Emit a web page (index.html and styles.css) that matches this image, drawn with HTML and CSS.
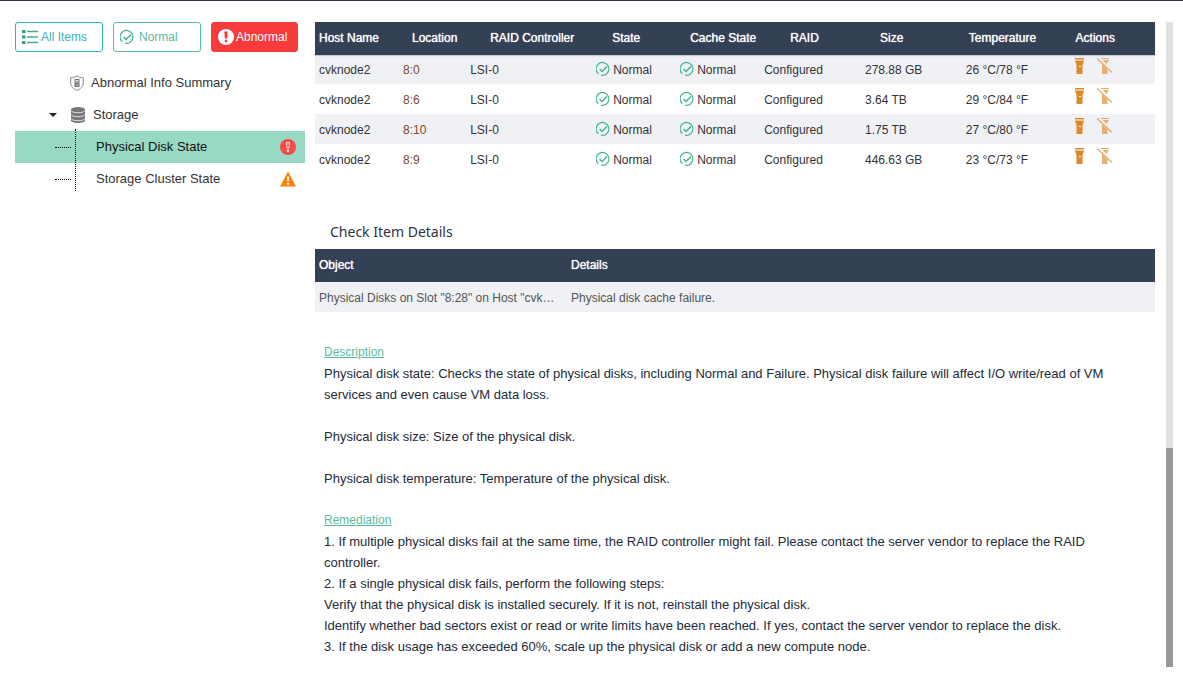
FILE: index.html
```html
<!DOCTYPE html>
<html lang="en">
<head>
<meta charset="utf-8">
<title>Health Check</title>
<link rel="stylesheet" href="styles.css">
</head>
<body>
<svg class="defs" aria-hidden="true">
  <symbol id="i-ok" viewBox="0 0 14 14">
    <path d="M2.400 11.800A6.400 6.400 0 1 1 5 13.100M10.500 12.400a6.400 6.400 0 0 1-4 1" fill="none" stroke="#3fb489" stroke-width="1.100"/>
    <path d="M3.600 7.100l2.500 2.400 4.800-5" fill="none" stroke="#3fb489" stroke-width="1.400"/>
  </symbol>
  <symbol id="i-torch" viewBox="0 0 16 16">
    <path d="M4 0h9v1H4z" fill="#d98a2c"/>
    <path d="M4 1h9v2H4z" fill="#ecc493"/>
    <path d="M4 3h9l-1.500 4v9h-6V7z" fill="#dd8a26"/>
    <path d="M8 8h2v1H8z" fill="#fff3e2"/>
  </symbol>
  <symbol id="i-torch-off" viewBox="0 0 16 16">
    <path d="M3.500 0H12v1H4.500z" fill="#e3aa66"/>
    <path d="M5.500 2H12l-2.500 4z" fill="#e6b075"/>
    <path d="M5 6l5.500 5.500V16H5z" fill="#e6b075"/>
    <path d="M0 .5l15 14" stroke="#e6b075" stroke-width="1.600"/>
  </symbol>
</svg>
<div class="page">
  <aside class="sidebar">
    <div class="filters">
      <button class="filter all"><svg class="icon16" viewBox="0 0 16 14"><path d="M0 0h3.500v3H0zM0 5.500h3.500v3H0zM0 11h3.500v3H0z" fill="#2fa385"/><path d="M5 1.500h11M5 7h11M5 12.500h11" stroke="#3fae90" stroke-width="1.600"/></svg>All Items</button>
      <button class="filter normal"><svg class="icon14"><use href="#i-ok"/></svg>Normal</button>
      <button class="filter abnormal"><svg class="icon16" viewBox="0 0 16 16"><circle cx="8" cy="8" r="8" fill="#fff"/><path d="M6.300 2.600h3.400L9.200 9.500H6.800z" fill="#f83b3b"/><circle cx="8" cy="12" r="1.400" fill="#f83b3b"/></svg>Abnormal</button>
    </div>
    <ul class="tree">
      <li class="node summary">
        <svg class="icon14" viewBox="0 0 14 16"><path d="M7 .8c2 1.500 4 2 6.300 2V8c0 3.500-2.500 5.800-6.300 7.300C3.200 13.800.7 11.500.7 8V2.800c2.300 0 4.300-.5 6.300-2z" fill="none" stroke="#888"/><path d="M4.500 4h5v8h-5z" fill="#777"/><path d="M5.500 5.500h3M5.500 7h3M7 9v2" stroke="#fff" stroke-width=".8"/></svg>
        Abnormal Info Summary
      </li>
      <li class="node storage">
        <svg class="caret" viewBox="0 0 8 4"><path d="M0 0h8L4 4z" fill="#222"/></svg>
        <svg class="icon16" viewBox="0 0 16 16"><path d="M1 2.500v11C1 14.900 4 16 8 16s7-1.100 7-2.500v-11" fill="#777"/><ellipse cx="8" cy="2.500" rx="7" ry="2.500" fill="#777"/><path d="M1 3.500c1 3 13 3 14 0M1 7.500c1 3 13 3 14 0M1 11.500c1 3 13 3 14 0" fill="none" stroke="#eee" stroke-width=".9"/></svg>
        Storage
      </li>
      <li>
        <ul class="children">
          <li class="node leaf selected">
            <span class="link-line"></span><span class="label">Physical Disk State</span>
            <svg class="icon16" viewBox="0 0 16 16"><circle cx="8" cy="8" r="8" fill="#f94a4a"/><path d="M6 3h4l-.7 6.500H6.700z" fill="#fbd9d3"/><path d="M7.300 4h1.400v4H7.300z" fill="#f94a4a"/><circle cx="8" cy="12" r="1.400" fill="#fbd9d3"/></svg>
          </li>
          <li class="node leaf">
            <span class="link-line"></span><span class="label">Storage Cluster State</span>
            <svg class="icon16" viewBox="0 0 16 16"><path d="M8 .5L16 15.500H0z" fill="#ff8208"/><path d="M7 5.500h2l-.3 5H7.300zM7 12h2v1.800H7z" fill="#fff"/></svg>
          </li>
        </ul>
      </li>
    </ul>
  </aside>

  <main class="content">
    <table class="grid disks">
      <thead>
        <tr><th class="c-host">Host Name</th><th class="c-loc">Location</th><th class="c-ctl">RAID Controller</th><th class="c-state">State</th><th class="c-cache">Cache State</th><th class="c-raid">RAID</th><th class="c-size">Size</th><th class="c-temp">Temperature</th><th class="c-act">Actions</th></tr>
      </thead>
      <tbody>
        <tr><td>cvknode2</td><td class="loc">8:0</td><td>LSI-0</td><td><span class="status"><svg class="icon14"><use href="#i-ok"/></svg>Normal</span></td><td><span class="status"><svg class="icon14"><use href="#i-ok"/></svg>Normal</span></td><td>Configured</td><td>278.88 GB</td><td>26 °C/78 °F</td><td><div class="actions"><button aria-label="Turn on locator"><svg class="icon16"><use href="#i-torch"/></svg></button><button aria-label="Turn off locator"><svg class="icon16"><use href="#i-torch-off"/></svg></button></div></td></tr>
        <tr><td>cvknode2</td><td class="loc">8:6</td><td>LSI-0</td><td><span class="status"><svg class="icon14"><use href="#i-ok"/></svg>Normal</span></td><td><span class="status"><svg class="icon14"><use href="#i-ok"/></svg>Normal</span></td><td>Configured</td><td>3.64 TB</td><td>29 °C/84 °F</td><td><div class="actions"><button aria-label="Turn on locator"><svg class="icon16"><use href="#i-torch"/></svg></button><button aria-label="Turn off locator"><svg class="icon16"><use href="#i-torch-off"/></svg></button></div></td></tr>
        <tr><td>cvknode2</td><td class="loc">8:10</td><td>LSI-0</td><td><span class="status"><svg class="icon14"><use href="#i-ok"/></svg>Normal</span></td><td><span class="status"><svg class="icon14"><use href="#i-ok"/></svg>Normal</span></td><td>Configured</td><td>1.75 TB</td><td>27 °C/80 °F</td><td><div class="actions"><button aria-label="Turn on locator"><svg class="icon16"><use href="#i-torch"/></svg></button><button aria-label="Turn off locator"><svg class="icon16"><use href="#i-torch-off"/></svg></button></div></td></tr>
        <tr><td>cvknode2</td><td class="loc">8:9</td><td>LSI-0</td><td><span class="status"><svg class="icon14"><use href="#i-ok"/></svg>Normal</span></td><td><span class="status"><svg class="icon14"><use href="#i-ok"/></svg>Normal</span></td><td>Configured</td><td>446.63 GB</td><td>23 °C/73 °F</td><td><div class="actions"><button aria-label="Turn on locator"><svg class="icon16"><use href="#i-torch"/></svg></button><button aria-label="Turn off locator"><svg class="icon16"><use href="#i-torch-off"/></svg></button></div></td></tr>
      </tbody>
    </table>

    <h2 class="heading">Check Item Details</h2>
    <table class="grid details">
      <thead><tr><th class="c-object">Object</th><th>Details</th></tr></thead>
      <tbody><tr><td>Physical Disks on Slot "8:28" on Host "cvk…</td><td>Physical disk cache failure.</td></tr></tbody>
    </table>

    <section class="notes">
      <h3>Description</h3>
      <p class="spaced">Physical disk state: Checks the state of physical disks, including Normal and Failure. Physical disk failure will affect I/O write/read of VM services and even cause VM data loss.</p>
      <p class="spaced">Physical disk size: Size of the physical disk.</p>
      <p class="spaced">Physical disk temperature: Temperature of the physical disk.</p>
      <h3>Remediation</h3>
      <p>1. If multiple physical disks fail at the same time, the RAID controller might fail. Please contact the server vendor to replace the RAID controller.</p>
      <p>2. If a single physical disk fails, perform the following steps:</p>
      <p>Verify that the physical disk is installed securely. If it is not, reinstall the physical disk.</p>
      <p>Identify whether bad sectors exist or read or write limits have been reached. If yes, contact the server vendor to replace the disk.</p>
      <p>3. If the disk usage has exceeded 60%, scale up the physical disk or add a new compute node.</p>
    </section>
  </main>
  <div class="scrollbar"><div class="thumb"></div></div>
</div>
</body>
</html>
```
FILE: styles.css
```css
* { box-sizing: border-box; }
body {
  margin: 0;
  min-height: 100vh;
  display: flex;
  flex-direction: column;
  background: #fff;
  border-top: 1px solid #32324a;
  font: 12px "Liberation Sans", Arial, sans-serif;
  color: #333;
}
.defs { display: none; }
h2, h3, p, ul { margin: 0; padding: 0; }
ul { list-style: none; }
button { font: inherit; cursor: pointer; }
svg { display: block; flex: none; }
.icon16 { width: 16px; height: 16px; }
.icon14 { width: 14px; height: 16px; }

.page {
  flex: 1;
  display: flex;
  gap: 10px;
  padding: 21px 10px 15px 15px;
}
.sidebar { flex: 0 0 290px; }
.filters { display: flex; gap: 10px; }
.filter {
  display: flex;
  align-items: center;
  gap: 3px;
  width: 88px;
  height: 30px;
  padding: 0 6px;
  border: 1px solid #2fb3be;
  border-radius: 3px;
  background: #fff;
  color: #3db0b8;
}
.filter.normal { gap: 5px; border-color: #55bd9b; color: #5cb99c; }
.filter.abnormal { gap: 2px; width: 87px; border-color: #f83b3b; background: #f83b3b; color: #fff; }

.tree { margin-top: 15px; font-size: 13px; }
.node { display: flex; align-items: center; height: 32px; padding-bottom: 1px; }
.summary { padding-left: 55px; gap: 7px; }
.storage { padding-left: 34px; }
.caret { width: 8px; height: 4px; margin-right: 13px; }
.storage .icon16 { margin-right: 7px; }
.children { position: relative; }
.children::before {
  content: "";
  position: absolute;
  left: 60px;
  top: -2px;
  bottom: 4px;
  border-left: 1px dotted #000;
}
.leaf { padding: 0 9px 0 40px; }
.selected { background: #98d9c3; color: #111; }
.link-line { width: 16px; margin-right: 25px; border-top: 1px dotted #000; }
.label { flex: 1; padding-bottom: 2px; }

.content { flex: 1; min-width: 0; padding-right: 1px; }
.grid { width: 100%; table-layout: fixed; border-collapse: collapse; }
.grid th, .grid td { padding: 0 4px; text-align: left; font-weight: 400; white-space: nowrap; }
.grid th {
  height: 33px;
  background: #344054;
  color: #fff;
  text-shadow: 0 0 1px #fff;
}
.grid td { height: 30px; padding-top: 2px; }
.grid tbody tr:nth-child(odd) { background: #f0f1f5; }
.disks thead tr { position: relative; box-shadow: 0 1px 0 #344054, 0 2px 1px #c8ccd2; }
.disks th { height: 32px; }
.disks .c-host { width: 10%; }
.disks .c-loc { width: 8%; padding-left: 13px; }
.disks .c-ctl { width: 15%; padding-left: 24px; }
.disks .c-state { width: 10%; padding-left: 20px; }
.disks .c-cache { width: 10%; padding-left: 14px; }
.disks .c-raid { width: 12%; padding-left: 30px; }
.disks .c-size { width: 12%; padding-left: 19px; }
.disks .c-temp { width: 12%; padding-left: 7px; }
.disks .c-act { padding-left: 13px; }
.loc { color: #7a4a2a; }
.status { display: flex; align-items: center; gap: 3px; }
.status svg { margin-bottom: 3px; }
.actions { display: flex; gap: 10px; padding: 0 4px 8px; }
.actions button { padding: 0; border: 0; background: none; }

.heading {
  margin: 47px 0 7px 15px;
  font: 14px/21px "Noto Sans", sans-serif;
  color: #2c3345;
}
.c-object { width: 30%; }
.details th { padding-bottom: 2px; }
.details td { color: #555; }

.notes {
  margin-top: 30px;
  padding: 0 20px 0 9px;
  font-size: 13px;
  line-height: 21px;
  color: #222b3a;
}
.notes h3 { font-size: 12px; font-weight: 400; color: #5cba9f; text-decoration: underline; }
.spaced { margin-bottom: 21px; }

.scrollbar {
  flex: 0 0 7px;
  display: flex;
  flex-direction: column;
  justify-content: flex-end;
  background: #e1e1e1;
}
.thumb { height: 34%; background: #989898; }
```
